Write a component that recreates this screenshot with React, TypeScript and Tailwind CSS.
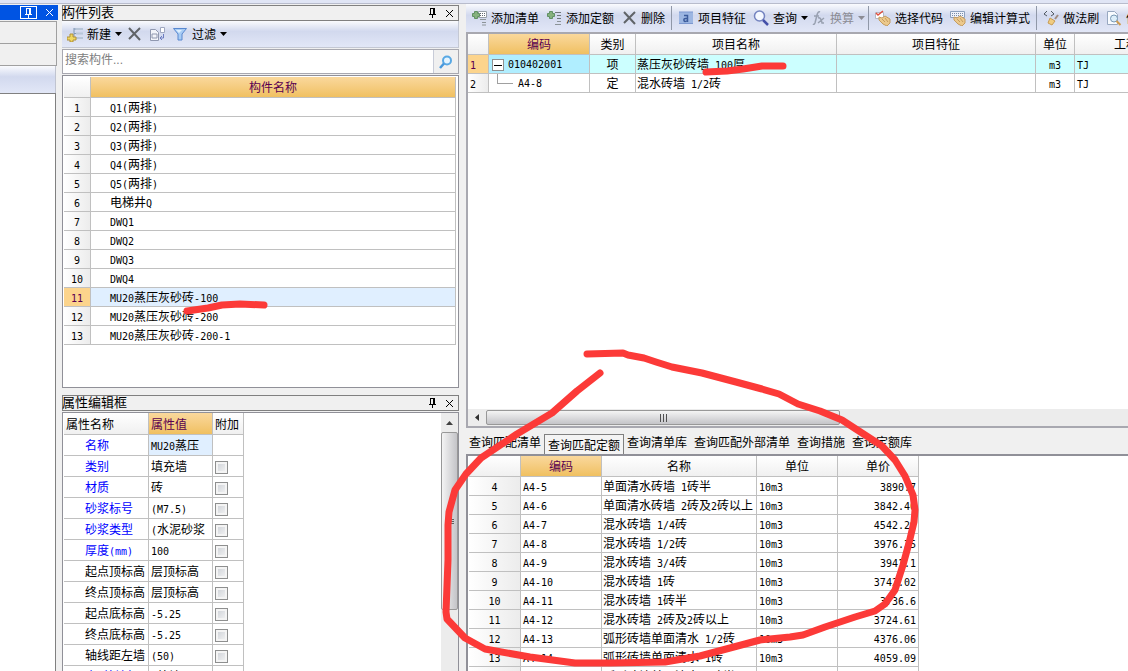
import type { ReactNode } from 'react';

const components = [
  'Q1(两排)', 'Q2(两排)', 'Q3(两排)', 'Q4(两排)', 'Q5(两排)', '电梯井Q', 'DWQ1', 'DWQ2', 'DWQ3', 'DWQ4',
  'MU20蒸压灰砂砖-100', 'MU20蒸压灰砂砖-200', 'MU20蒸压灰砂砖-200-1'
];

const properties = [
  { name: '名称', value: 'MU20蒸压', blue: true, check: false },
  { name: '类别', value: '填充墙', blue: true, check: true },
  { name: '材质', value: '砖', blue: true, check: true },
  { name: '砂浆标号', value: '(M7.5)', blue: true, check: true },
  { name: '砂浆类型', value: '(水泥砂浆', blue: true, check: true },
  { name: '厚度(mm)', value: '100', blue: true, check: true },
  { name: '起点顶标高', value: '层顶标高', blue: false, check: true },
  { name: '终点顶标高', value: '层顶标高', blue: false, check: true },
  { name: '起点底标高', value: '-5.25', blue: false, check: true },
  { name: '终点底标高', value: '-5.25', blue: false, check: true },
  { name: '轴线距左墙', value: '(50)', blue: false, check: true },
  { name: '内/外墙标', value: '(外墙)', blue: true, check: true }
];

const items = [
  { code: '010402001', kind: '项', name: '蒸压灰砂砖墙 100厚', unit: 'm3', qty: 'TJ' },
  { code: 'A4-8', kind: '定', name: '混水砖墙 1/2砖', unit: 'm3', qty: 'TJ' }
];

const quotas = [
  { no: 4, code: 'A4-5', name: '单面清水砖墙 1砖半', price: '3890.7' },
  { no: 5, code: 'A4-6', name: '单面清水砖墙 2砖及2砖以上', price: '3842.46' },
  { no: 6, code: 'A4-7', name: '混水砖墙 1/4砖', price: '4542.29' },
  { no: 7, code: 'A4-8', name: '混水砖墙 1/2砖', price: '3976.35' },
  { no: 8, code: 'A4-9', name: '混水砖墙 3/4砖', price: '3941.1' },
  { no: 9, code: 'A4-10', name: '混水砖墙 1砖', price: '3742.02' },
  { no: 10, code: 'A4-11', name: '混水砖墙 1砖半', price: '3736.6' },
  { no: 11, code: 'A4-12', name: '混水砖墙 2砖及2砖以上', price: '3724.61' },
  { no: 12, code: 'A4-13', name: '弧形砖墙单面清水 1/2砖', price: '4376.06' },
  { no: 13, code: 'A4-14', name: '弧形砖墙单面清水 1砖', price: '4059.09' },
  { no: 14, code: 'A4-15', name: '弧形砖墙单面清水 1砖半', price: '4021.5' }
];

const tabs = ['查询匹配清单', '查询匹配定额', '查询清单库', '查询匹配外部清单', '查询措施', '查询定额库'];

const cell = 'border-r border-b border-[#c0c0c0] p-0 pt-0.5 overflow-hidden font-normal leading-[14px]';
const head = 'bg-linear-to-b from-white to-[#f0f0f0]';
const headActive = 'bg-linear-to-b from-[#fad89c] to-[#f0c060] text-[#5a0050]';
const rowNo = 'bg-linear-to-r from-white to-[#ececec]';
const toolbar = 'bg-linear-to-b from-[#fafbfe] from-0% via-[#d2d9ee] via-40% to-[#e2e7f7]';

// Chinese at 12px, everything else in a 6px wide monospace
function Mixed({ text }: { text: string }) {
  const parts = text.match(/[\u4e00-\u9fff]+|[^\u4e00-\u9fff]+/g) ?? [];
  return (
    <>
      {parts.map((part, i) =>
        /[\u4e00-\u9fff]/.test(part)
          ? part
          : <span key={i} className="font-['DejaVu_Sans_Mono',monospace] text-[10px] whitespace-pre">{part}</span>
      )}
    </>
  );
}

function Svg({ children, w = 16 }: { children: ReactNode; w?: number }) {
  return <svg width={w} height="16" viewBox={`0 0 ${w} 16`} fill="none" className="shrink-0">{children}</svg>;
}

function CrossIcon() {
  return <Svg><path d="M3 2l11 12M14 2L3 13" stroke="#606468" strokeWidth="2" /></Svg>;
}

function NewIcon() {
  return (
    <Svg>
      <path d="M7 2v11M7 3h9M7 7.500h9M7 12h9" stroke="#8098b4" />
      <path d="M9 2h7v2H9zM9 6.500h7v2H9zM9 11h7v2H9z" fill="#b8c6d8" />
      <path d="M3 8h3v3h3v3H6v2H3v-2H0v-3h3z" fill="#f0d860" stroke="#b09038" />
    </Svg>
  );
}

function CopyIcon() {
  return (
    <Svg>
      <path d="M1.500 3.500h5l3 3v8h-8z" fill="#f2f4fa" stroke="#9098b0" />
      <path d="M3 8h5v4H3z" stroke="#9098b0" />
      <path d="M11.500 1.500h4v5h-4z" fill="#fff" stroke="#a0a8c0" />
      <path d="M14.500 8v4h-3m1.500-2l-2 2 2 2" stroke="#6c7cc0" />
    </Svg>
  );
}

function FilterIcon() {
  return <Svg><path d="M1.500 2.500h13L10 8v6H6V8z" fill="#a8ccf4" stroke="#5888d0" /><path d="M4 4h6L7 7z" fill="#deeffe" /></Svg>;
}

function AddListIcon({ grid = false }: { grid?: boolean }) {
  return (
    <Svg>
      {grid && <path d="M7.500 1.500h8v6h-8z" fill="#fff" stroke="#98a0a8" />}
      {grid && <path d="M9 3.500h1m1 0h1m1 0h1M9 5.500h1m1 0h1m1 0h1" stroke="#606870" />}
      {!grid && <path d="M9 2.500h6M11 5.500h4M11 8.500h4" stroke="#70787c" />}
      <path d={grid ? 'M9 9.500h6M11 12.500h4M11 15h4' : 'M11 11.500h4M9 14.500h6'} stroke="#8c9498" />
      <path d="M3.500 1.500h3v2h2v3h-2v2h-3v-2h-2v-3h2z" fill="#86b27e" stroke="#609064" />
    </Svg>
  );
}

function FeatureIcon() {
  return (
    <Svg>
      <path d="M1 2h14v12H1z" fill="#9cb6e2" />
      <path d="M1 2h14M1 13.500h14" stroke="#7c98d0" />
      <path d="M6 5.500h3.500V12M9.500 8.500H7.500q-2 0-1.500 2t3.500 0" stroke="#3c5c9c" strokeWidth="1.500" />
    </Svg>
  );
}

function FindIcon() {
  return (
    <Svg>
      <circle cx="6.500" cy="6" r="5" fill="#f4f8ff" stroke="#7484c0" strokeWidth="1.500" />
      <path d="M10 10l5 5" stroke="#4450a8" strokeWidth="2.500" />
    </Svg>
  );
}

function FxIcon() {
  return <Svg w={14}><path d="M8 2q-2-1-3 3L3 13q-1 2-2 1M2 6h5M6 8q3-1 4 5h2M12 8l-6 5" stroke="#98a0b0" strokeWidth="1.500" /></Svg>;
}

function HandIcon({ keys = false }: { keys?: boolean }) {
  return (
    <Svg>
      {keys
        ? <><path d="M.5 1.500h14v6H.5z" fill="#eef2fa" stroke="#8ca0bc" /><path d="M2 3.500h11M2 5.500h11" stroke="#788ca8" strokeDasharray="1 1" /></>
        : <><path d="M.5 2.500h8v6h-8z" fill="#fff" stroke="#b4b8c4" /><path d="M1 3l2 2 5-4" stroke="#e05040" strokeWidth="1.500" /></>}
      <path d="M4 7l3 1 3-2 5 3v4l-3 3-4-2-4-4z" fill="#ecc98c" stroke="#c49c60" />
      <path d="M7 9l3 3M10 8l3 4" stroke="#c49c60" />
    </Svg>
  );
}

function BrushIcon() {
  return (
    <Svg>
      <path d="M4 1L1 4l3 2M8 1l3 3-3 2" stroke="#505860" />
      <path d="M15 5l-3 4" stroke="#a08c80" strokeWidth="2" />
      <path d="M7 8l5 3-3 4-4-2z" fill="#f0cc80" stroke="#c89c54" />
    </Svg>
  );
}

function PreviewIcon() {
  return (
    <Svg>
      <path d="M1.500 1.500h7l3 3v10h-10z" fill="#f8fbff" stroke="#98a8c0" />
      <circle cx="8" cy="8.500" r="3.500" fill="#dceefa" stroke="#7898b4" />
      <path d="M10.500 11l4 4" stroke="#d09c50" strokeWidth="2" />
    </Svg>
  );
}

function Pin() {
  return (
    <svg width="9" height="10" viewBox="0 0 9 10" fill="none" stroke="currentColor" shapeRendering="crispEdges">
      <path d="M2.500 0v6M2 .5h4M5.500 0v6M6.500 0v6M1 6.500h7M4.500 7v3" />
    </svg>
  );
}

function Close() {
  return <svg width="9" height="9" viewBox="0 0 9 9" stroke="currentColor"><path d="M1 1l7 7M8 1L1 8" /></svg>;
}

function Tool({ icon, label, menu, muted }: { icon: ReactNode; label?: string; menu?: boolean; muted?: boolean }) {
  return (
    <button
      aria-label={label ?? 'tool'}
      className={`flex shrink-0 items-center gap-1 whitespace-nowrap ${menu ? '-mr-[3px]' : ''} ${muted ? 'text-[#8c8c94]' : ''}`}
    >
      {icon}
      {label && <span className="pt-0.5">{label}</span>}
      {menu && <svg width="7" height="4" viewBox="0 0 7 4" fill="currentColor"><path d="M0 0h7L3.500 4z" /></svg>}
    </button>
  );
}

function Separator() {
  return <div className="-mx-px h-6 w-px shrink-0 bg-[#9098a8]" />;
}

function PanelTitle({ title }: { title: string }) {
  return (
    <div className="flex h-4 shrink-0 items-center border border-[#808080] bg-[#f0f0f0] pr-1">
      <h2 className="-ml-px flex-1 text-[13px] leading-[14px]">{title}</h2>
      <button aria-label="固定" className="mr-2"><Pin /></button>
      <button aria-label="关闭"><Close /></button>
    </div>
  );
}

function DockEdge() {
  return (
    <aside className="flex w-[58px] shrink-0 flex-col pt-px">
      <div className="flex h-[15px] shrink-0 items-center justify-end gap-1 bg-[#0054e3] pr-1 text-white">
        <button aria-label="固定" className="flex h-[13px] w-[17px] items-center justify-center border border-white"><Pin /></button>
        <button aria-label="关闭" className="pl-1"><Close /></button>
      </div>
      <div className="mt-px mr-px h-[23px] shrink-0 border-y border-r border-[#a0a0a0] bg-[#f0f0f0]" />
      <div className="mr-px h-[22px] shrink-0 border-r border-b border-[#a0a0a0] bg-[#f0f0f0]" />
      <div className={`mr-[2px] h-[27px] shrink-0 border-r border-[#c0c4d0] ${toolbar}`} />
      <div className="mr-[2px] flex-1 border-t border-r border-[#808080] bg-white" />
    </aside>
  );
}

function ComponentList() {
  return (
    <section>
      <PanelTitle title="构件列表" />
      <div className={`flex h-[27px] items-center gap-[7px] border-r border-b border-[#c4c8d4] pl-[5px] ${toolbar}`}>
        <Tool icon={<NewIcon />} label="新建" menu />
        <Tool icon={<CrossIcon />} />
        <Tool icon={<CopyIcon />} />
        <Tool icon={<FilterIcon />} label="过滤" menu />
      </div>
      <div className="mt-px flex h-[25px] items-stretch border border-[#a8a8b0]">
        <input
          aria-label="搜索构件"
          placeholder="搜索构件..."
          className="min-w-0 flex-1 border-r border-[#c8ccd8] bg-white px-0.5 pb-1 text-xs outline-none placeholder:text-[#808080]"
        />
        <button aria-label="搜索" className="flex w-6 items-center justify-center">
          <svg width="14" height="14" viewBox="0 0 14 14" fill="none">
            <circle cx="8" cy="5.500" r="4" fill="#e4f4ff" stroke="#58a8e4" strokeWidth="2" />
            <path d="M5 8.500L1 13" stroke="#4898dc" strokeWidth="2.500" />
          </svg>
        </button>
      </div>
      <div className="mt-px border border-[#909098] bg-white pt-px pr-0.5 pb-[42px] pl-px">
        <table className="w-full table-fixed border-separate border-spacing-0">
          <colgroup><col className="w-[27px]" /><col /></colgroup>
          <thead>
            <tr className="h-[21px]">
              <th className={`${cell} ${head}`} />
              <th className={`${cell} ${headActive}`}>构件名称</th>
            </tr>
          </thead>
          <tbody>
            {components.map((name, i) => (
              <tr key={name} className="h-[19px]">
                <td className={`${cell} text-center ${i === 10 ? 'bg-[#fcd48c] text-[#5a0050]' : rowNo}`}><Mixed text={`${i + 1}`} /></td>
                <td className={`${cell} pl-[19px] ${i === 10 ? 'bg-[#e0efff]' : ''}`}><Mixed text={name} /></td>
              </tr>
            ))}
          </tbody>
        </table>
      </div>
    </section>
  );
}

function PropertyEditor() {
  return (
    <section className="mt-[7px] flex min-h-0 flex-1 flex-col">
      <PanelTitle title="属性编辑框" />
      <div className="mt-px flex min-h-0 flex-1 justify-between overflow-hidden border border-b-0 border-[#909098] bg-white pl-px">
        <table className="w-[180px] table-fixed self-start border-separate border-spacing-0 whitespace-nowrap">
          <colgroup><col className="w-[85px]" /><col className="w-16" /><col className="w-[31px]" /></colgroup>
          <thead>
            <tr className="h-[22px] text-left">
              <th className={`${cell} ${head} pl-0.5`}>属性名称</th>
              <th className={`${cell} ${headActive} pl-0.5`}>属性值</th>
              <th className={`${cell} ${head} pl-0.5`}>附加</th>
            </tr>
          </thead>
          <tbody>
            {properties.map((p) => (
              <tr key={p.name} className="h-[21px]">
                <td className={`${cell} pl-[21px] ${p.blue ? 'text-[#0000ff]' : ''}`}><Mixed text={p.name} /></td>
                <td className={`${cell} pl-0.5 ${p.check ? '' : 'bg-[#e0efff]'}`}><Mixed text={p.value} /></td>
                <td className={`${cell} pl-0.5`}>
                  {p.check && (
                    <input
                      type="checkbox"
                      aria-label={`附加 ${p.name}`}
                      className="block size-[13px] appearance-none border border-[#8e8f8f] bg-linear-to-br from-[#cbcfd5] to-[#f6f6f6] ring-2 ring-[#f4f4f4] ring-inset"
                    />
                  )}
                </td>
              </tr>
            ))}
          </tbody>
        </table>
        <div className="flex w-[17px] flex-col bg-[#ececec]">
          <div className="flex h-[19px] items-center justify-center">
            <svg width="7" height="4" viewBox="0 0 7 4"><path d="M0 4h7L3.500 0z" fill="#404040" /></svg>
          </div>
          <div className="flex h-[178px] flex-col items-center justify-center gap-px rounded-xs border border-[#989898] bg-linear-to-r from-[#f4f4f4] to-[#c4c4c8]">
            <i className="h-px w-2 bg-[#606060]" /><i className="h-px w-2 bg-[#606060]" /><i className="h-px w-2 bg-[#606060]" />
          </div>
        </div>
      </div>
    </section>
  );
}

function ItemGrid() {
  const bg = (i: number) => (i === 0 ? 'bg-[#ccffff]' : '');
  return (
    <div className="flex h-[396px] shrink-0 flex-col overflow-hidden border-y-2 border-l-2 border-[#a8a8b0] bg-white">
      <div className="flex-1 overflow-hidden">
        <table className="w-[758px] min-w-full table-fixed border-separate border-spacing-0 whitespace-nowrap">
          <colgroup>
            <col className="w-[21px]" /><col className="w-[101px]" /><col className="w-[46px]" /><col className="w-[201px]" />
            <col className="w-[199px]" /><col className="w-[39px]" /><col />
          </colgroup>
          <thead>
            <tr className="h-[21px]">
              <th className={`${cell} ${head}`} />
              <th className={`${cell} ${headActive}`}>编码</th>
              {['类别', '项目名称', '项目特征', '单位', '工程量表达式'].map((h) => <th key={h} className={`${cell} ${head}`}>{h}</th>)}
            </tr>
          </thead>
          <tbody>
            {items.map((item, i) => (
              <tr key={item.code} className="h-[19px]">
                <td className={`${cell} pl-0.5 ${i === 0 ? 'bg-[#fcd48c] text-[#5a0050]' : rowNo}`}><Mixed text={`${i + 1}`} /></td>
                <td className={`${cell} ${i === 0 ? 'bg-[#b0eeff]' : ''}`}>
                  <div className="flex h-4 items-center">
                    {i === 0 ? (
                      <button aria-label="折叠" className="mr-1 ml-[3px] flex size-3 items-center justify-center border border-[#909090] bg-white">
                        <i className="h-px w-2 bg-black" />
                      </button>
                    ) : (
                      <div className="mr-[5px] mb-2.5 ml-2 h-2.5 w-4 border-b border-l border-[#a0a0a0]" />
                    )}
                    <Mixed text={item.code} />
                  </div>
                </td>
                <td className={`${cell} text-center ${bg(i)}`}>{item.kind}</td>
                <td className={`${cell} pl-px ${bg(i)}`}><Mixed text={item.name} /></td>
                <td className={`${cell} ${bg(i)}`} />
                <td className={`${cell} text-center ${bg(i)}`}><Mixed text={item.unit} /></td>
                <td className={`${cell} pl-0.5 ${bg(i)}`}><Mixed text={item.qty} /></td>
              </tr>
            ))}
          </tbody>
        </table>
      </div>
      <div className="flex h-[17px] shrink-0 bg-[#ececec]">
        <div className="flex w-[18px] items-center justify-center">
          <svg width="4" height="7" viewBox="0 0 4 7"><path d="M4 0v7L0 3.500z" fill="#303030" /></svg>
        </div>
        <div className="my-px flex w-[354px] items-center justify-center gap-0.5 rounded-xs border border-[#989898] bg-linear-to-b from-[#f4f4f4] to-[#c4c4c8]">
          <i className="h-2 w-px bg-[#505050]" /><i className="h-2 w-px bg-[#505050]" /><i className="h-2 w-px bg-[#505050]" />
        </div>
      </div>
    </div>
  );
}

function QuotaGrid() {
  return (
    <div className="min-h-0 flex-1 overflow-hidden border-t-2 border-l-2 border-[#909098] bg-white pl-px">
      <table className="w-[450px] table-fixed border-separate border-spacing-0 whitespace-nowrap">
        <colgroup>
          <col className="w-[52px]" /><col className="w-[81px]" /><col className="w-[155px]" /><col className="w-[81px]" /><col className="w-[81px]" />
        </colgroup>
        <thead>
          <tr className="h-[21px]">
            <th className={`${cell} ${head}`} />
            <th className={`${cell} ${headActive}`}>编码</th>
            {['名称', '单位', '单价'].map((h) => <th key={h} className={`${cell} ${head}`}>{h}</th>)}
          </tr>
        </thead>
        <tbody>
          {quotas.map((q) => (
            <tr key={q.no} className="h-[19px]">
              <td className={`${cell} text-center ${rowNo}`}><Mixed text={`${q.no}`} /></td>
              <td className={`${cell} pl-0.5`}><Mixed text={q.code} /></td>
              <td className={`${cell} pl-px`}><Mixed text={q.name} /></td>
              <td className={`${cell} pl-0.5`}><Mixed text="10m3" /></td>
              <td className={`${cell} pr-0.5 text-right`}><Mixed text={q.price} /></td>
            </tr>
          ))}
        </tbody>
      </table>
    </div>
  );
}

// Red pen marks on top of the window
function PenMarks() {
  return (
    <svg
      width="1128" height="671" viewBox="0 0 1128 671" fill="none" stroke="#fc3a38" strokeLinecap="round" strokeLinejoin="round"
      className="pointer-events-none absolute top-0 left-0"
    >
      <path d="M187 311L208 308 222 305 240 304 264 305" strokeWidth="7" />
      <path d="M706 72L727 71 743 69 762 66 783 66" strokeWidth="7" />
      <path
        d="M587 354L623 353 628 355 644 358 656 362 672 367 702 373 736 382 762 389 779 394 798 404 820 411 842 420 862 433 882 446 895 460 905 476 913 495 915 510 914 522 909 543 903 565 895 590 885 604 875 611 855 617 825 627 803 635 790 637 760 640 730 648 700 656 665 662 610 663 575 663 530 657 485 649 465 638 447 619 446 612 448 560 448 525 449 512 455 490 466 474 481 458 517 434 552 413 577 391 600 373"
        strokeWidth="7"
      />
    </svg>
  );
}

export default function App() {
  return (
    <div className="relative flex h-screen flex-col overflow-hidden bg-[#f0f0f0] font-['Liberation_Sans','Noto_Sans_CJK_SC',sans-serif] text-xs leading-4 text-black">
      <div className="h-1 shrink-0 border-b border-[#b8bccc] bg-[#e0e5f5]" />
      <div className="flex min-h-0 flex-1">
        <DockEdge />
        <main className="ml-1 flex w-[397px] shrink-0 flex-col pt-px">
          <ComponentList />
          <PropertyEditor />
        </main>
        <div className="ml-[7px] flex min-w-0 flex-1 flex-col">
          <div className={`flex h-7 shrink-0 items-center gap-[7px] overflow-hidden pl-[5px] ${toolbar}`}>
            <Tool icon={<AddListIcon grid />} label="添加清单" />
            <Tool icon={<AddListIcon />} label="添加定额" />
            <Tool icon={<CrossIcon />} label="删除" />
            <Separator />
            <Tool icon={<FeatureIcon />} label="项目特征" />
            <Tool icon={<FindIcon />} label="查询" menu />
            <Tool icon={<FxIcon />} label="换算" menu muted />
            <Separator />
            <Tool icon={<HandIcon />} label="选择代码" />
            <Tool icon={<HandIcon keys />} label="编辑计算式" />
            <Separator />
            <Tool icon={<BrushIcon />} label="做法刷" />
            <Tool icon={<PreviewIcon />} label="做法查询" />
          </div>
          <ItemGrid />
          <div className="mt-1 flex h-[22px] shrink-0 items-stretch gap-[3px] pl-[3px]">
            {tabs.map((tab, i) => (
              <button
                key={tab}
                className={`shrink-0 whitespace-nowrap ${i === 1 ? 'mt-0.5 border border-b-0 border-[#808080] bg-[#f4f4f4] px-[3px] pt-0.5' : i > 2 ? 'ml-1' : ''}`}
              >
                {tab}
              </button>
            ))}
          </div>
          <QuotaGrid />
        </div>
      </div>
      <PenMarks />
    </div>
  );
}
